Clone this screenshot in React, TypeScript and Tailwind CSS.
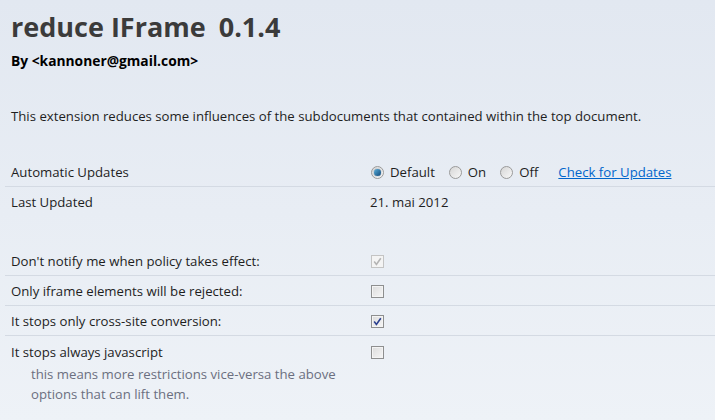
import React from 'react'

const font = { fontFamily: '"Segoe UI", "Open Sans", "Noto Sans", sans-serif' }

function Radio({ checked }: { checked?: boolean }) {
  return (
    <span className="relative inline-flex h-[13px] w-[13px] items-center justify-center rounded-full border border-[#9a9a9a] bg-gradient-to-br from-[#d6d6d6] to-[#f8f8f8]">
      {checked && (
        <span className="h-[7px] w-[7px] rounded-full bg-gradient-to-br from-[#5ab0dc] to-[#124a7a] shadow-[0_0_1px_#0a3560]" />
      )}
    </span>
  )
}

function Checkbox({ checked, disabled }: { checked?: boolean; disabled?: boolean }) {
  return (
    <span
      className={
        disabled
          ? 'ml-px inline-flex h-[13px] w-[13px] items-center justify-center border border-[#c4c4c4] bg-[#f4f4f4]'
          : 'ml-px inline-flex h-[13px] w-[13px] items-center justify-center border border-[#8e8f8f] bg-gradient-to-br from-[#dcdcdc] to-[#f6f6f6] shadow-[inset_0_0_0_1px_#f4f4f4]'
      }
    >
      {checked && (
        <svg width="9" height="9" viewBox="0 0 9 9">
          <path
            d="M1.2 4.6 L3.4 7.4 L7.8 1.2"
            fill="none"
            stroke={disabled ? '#b4b4b4' : '#2a3f8f'}
            strokeWidth="1.6"
          />
        </svg>
      )}
    </span>
  )
}

function Row({
  label,
  children,
  border = true,
}: {
  label: string
  children: React.ReactNode
  border?: boolean
}) {
  return (
    <div className={border ? 'ml-[5px] flex h-[30px] items-center border-b border-[#d4dae3] pt-[2px]' : 'ml-[5px] flex h-[30px] items-center pt-[2px]'}>
      <div className="w-[365px] pl-[6px]">{label}</div>
      <div className="flex items-center">{children}</div>
    </div>
  )
}

export default function App() {
  return (
    <div
      className="h-[420px] w-[715px] overflow-hidden bg-gradient-to-b from-[#e2e8f1] to-[#eef2f7] text-[13.2px] text-[#1e1e1e]"
      style={font}
    >
      <div className="px-[11px] pt-[9px]">
        <h1 className="text-[27px] font-bold leading-[36px] text-[#3b3b3b]">
          reduce IFrame <span className="ml-[6px]">0.1.4</span>
        </h1>
        <div className="mt-[7px] text-[13.8px] font-bold leading-[18px] text-black">
          By &lt;kannoner@gmail.com&gt;
        </div>
        <p className="mt-[37px] leading-[18px]">
          This extension reduces some influences of the subdocuments that contained within the top document.
        </p>
      </div>

      <div className="mt-[32px]">
        <Row label="Automatic Updates">
          <label className="ml-px flex items-center gap-[6px]">
            <Radio checked />
            <span>Default</span>
          </label>
          <label className="ml-[14px] flex items-center gap-[6px]">
            <Radio />
            <span>On</span>
          </label>
          <label className="ml-[14px] flex items-center gap-[6px]">
            <Radio />
            <span>Off</span>
          </label>
          <a href="#" className="ml-[20px] text-[#0066cc] underline">
            Check for Updates
          </a>
        </Row>
        <Row label="Last Updated" border={false}>
          <span>21. mai 2012</span>
        </Row>
      </div>

      <div className="mt-[29px]">
        <Row label="Don't notify me when policy takes effect:">
          <Checkbox checked disabled />
        </Row>
        <Row label="Only iframe elements will be rejected:">
          <Checkbox />
        </Row>
        <Row label="It stops only cross-site conversion:">
          <Checkbox checked />
        </Row>
        <div className="ml-[5px] pt-[8px]">
          <div className="flex items-center">
            <div className="w-[365px] pl-[6px] leading-[16px]">It stops always javascript</div>
            <Checkbox />
          </div>
          <p className="mt-[4px] w-[345px] pl-[26px] leading-[20px] text-[#6b6f80]">
            this means more restrictions vice-versa the above options that can lift them.
          </p>
        </div>
      </div>
    </div>
  )
}
